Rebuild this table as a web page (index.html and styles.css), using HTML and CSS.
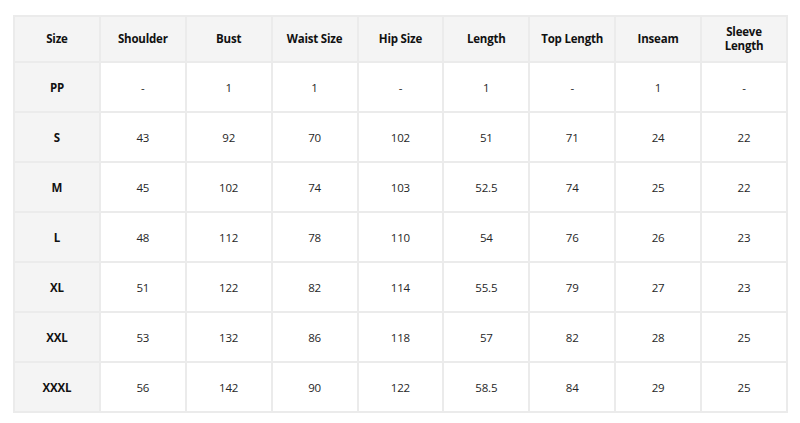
FILE: index.html
```html
<!DOCTYPE html>
<html>
<head>
<meta charset="utf-8">
<link rel="stylesheet" href="styles.css">
</head>
<body>
<div class="wrap">
<table class="chart">
<thead>
<tr><th>Size</th><th>Shoulder</th><th>Bust</th><th>Waist Size</th><th>Hip Size</th><th>Length</th><th>Top Length</th><th>Inseam</th><th>Sleeve<br>Length</th></tr>
</thead>
<tbody>
<tr><th>PP</th><td>-</td><td>1</td><td>1</td><td>-</td><td>1</td><td>-</td><td>1</td><td>-</td></tr>
<tr><th>S</th><td>43</td><td>92</td><td>70</td><td>102</td><td>51</td><td>71</td><td>24</td><td>22</td></tr>
<tr><th>M</th><td>45</td><td>102</td><td>74</td><td>103</td><td>52.5</td><td>74</td><td>25</td><td>22</td></tr>
<tr><th>L</th><td>48</td><td>112</td><td>78</td><td>110</td><td>54</td><td>76</td><td>26</td><td>23</td></tr>
<tr><th>XL</th><td>51</td><td>122</td><td>82</td><td>114</td><td>55.5</td><td>79</td><td>27</td><td>23</td></tr>
<tr><th>XXL</th><td>53</td><td>132</td><td>86</td><td>118</td><td>57</td><td>82</td><td>28</td><td>25</td></tr>
<tr><th>XXXL</th><td>56</td><td>142</td><td>90</td><td>122</td><td>58.5</td><td>84</td><td>29</td><td>25</td></tr>
</tbody>
</table>
</div>
</body>
</html>
```
FILE: styles.css
```css
html, body {
  margin: 0;
  padding: 0;
  background: #fff;
}
.wrap {
  padding: 15px 0 0 13px;
}
.chart {
  border-collapse: collapse;
  table-layout: fixed;
  width: 775px;
  font-family: "Open Sans", "Liberation Sans", sans-serif;
  font-size: 11.5px;
  color: #262626;
}
.chart th, .chart td {
  border: 2px solid #ebebeb;
  text-align: center;
  vertical-align: middle;
  padding: 0;
  height: 48px;
  letter-spacing: -0.2px;
}
.chart thead th {
  height: 44px;
  background: #f4f4f4;
  font-weight: 700;
  color: #111;
  line-height: 14px;
}
.chart tbody th {
  background: #f4f4f4;
  font-weight: 700;
  color: #111;
}
```
